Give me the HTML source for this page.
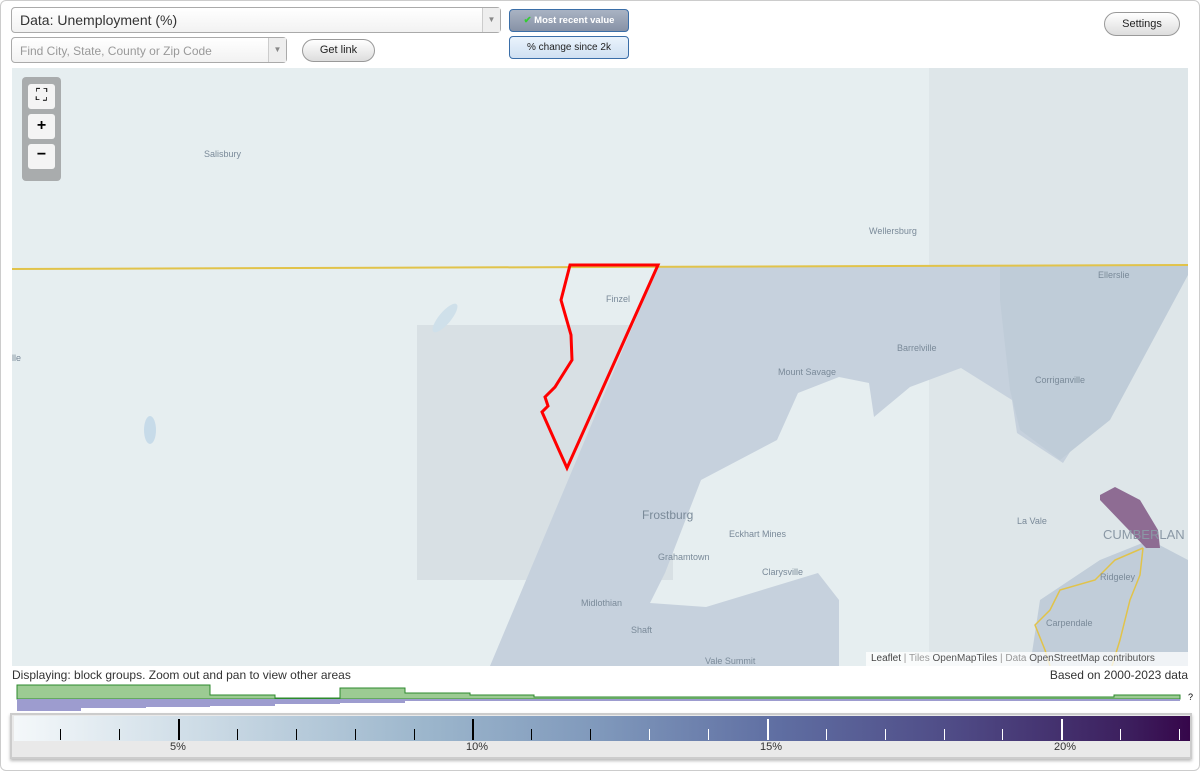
<!DOCTYPE html>
<html><head><meta charset="utf-8"><style>
*{margin:0;padding:0;box-sizing:border-box}
body{width:1200px;height:771px;background:#fff;font-family:"Liberation Sans",sans-serif;position:relative;overflow:hidden}
.frame{position:absolute;left:0;top:0;width:1200px;height:771px;border:1px solid #ccc;border-radius:6px}
.sel{position:absolute;border:1px solid #aaa;border-radius:4px;background:linear-gradient(#fff,#f2f2f2);font-size:14px;color:#333;padding:4px 8px}
.sel .arr{position:absolute;right:0;top:0;bottom:0;width:18px;border-left:1px solid #ccc;background:#eee;color:#888;font-size:8px;text-align:center;line-height:24px}
.btn{position:absolute;border:1px solid #999;border-radius:12px;background:linear-gradient(#fff,#ddd);font-size:11px;text-align:center;color:#222}
.tg{position:absolute;border:1px solid #3a6ea8;border-radius:4px;font-size:10px;text-align:center}
.lbl{position:absolute;font-size:9px;color:#7a8a99;white-space:nowrap}
.tick{position:absolute;width:1px;background:#000}
</style></head><body>
<div class="frame"></div>
<div class="sel" style="left:11px;top:7px;width:490px;height:26px">Data: Unemployment (%)<div class="arr">▼</div></div>
<div class="sel" style="left:11px;top:37px;width:276px;height:26px;color:#999;font-size:12px;padding-top:6px">Find City, State, County or Zip Code<div class="arr">▼</div></div>
<div class="btn" style="left:302px;top:39px;width:73px;height:23px;line-height:21px">Get link</div>
<div class="tg" style="left:509px;top:9px;width:120px;height:23px;line-height:21px;background:linear-gradient(#a9b3c3,#8792a6);color:#fff;font-weight:bold;font-size:9.5px"><span style="color:#3c3">✔</span> Most recent value</div>
<div class="tg" style="left:509px;top:36px;width:120px;height:23px;line-height:21px;background:linear-gradient(#eaf3fc,#cfe0f2);color:#222">% change since 2k</div>
<div class="btn" style="left:1104px;top:12px;width:76px;height:24px;line-height:22px">Settings</div>

<svg style="position:absolute;left:12px;top:68px" width="1176" height="598" viewBox="12 68 1176 598">
<rect x="12" y="68" width="1176" height="598" fill="#e6eef0"/>
<rect x="417" y="325" width="256" height="255" fill="#d8e0e4"/>
<rect x="929" y="68" width="259" height="598" fill="#dee6e9"/>
<polygon points="658,266 1188,266 1063,463 1017,433 1012,400 961,368 910,387 874,417 869,383 839,377 798,393 777,440 701,480 665,573 650,603 706,607 818,573 839,600 839,666 490,666" fill="#c6d1dd"/>
<polygon points="1000,266 1188,266 1188,275 1110,420 1060,460 1020,430 1010,390 1000,300" fill="#bfccd8"/>
<polygon points="1040,600 1100,560 1150,540 1188,560 1188,666 1030,666" fill="#c1cdd9"/>
<polygon points="1100,495 1115,487 1140,500 1158,530 1160,548 1146,548 1100,500" fill="#8e6c93"/>
<polyline points="1143,548 1140,575 1130,600 1120,640 1112,666" fill="none" stroke="#e1c34a" stroke-width="1.5"/>
<polyline points="1143,548 1115,560 1095,580 1060,590 1050,610 1035,625 1045,650 1050,666" fill="none" stroke="#e1c34a" stroke-width="1.5"/>
<ellipse cx="150" cy="430" rx="6" ry="14" fill="#c7dbe9"/>
<ellipse cx="445" cy="318" rx="18" ry="6" fill="#cfe0ea" transform="rotate(-50 445 318)"/>
<line x1="12" y1="269" x2="1188" y2="265" stroke="#e1c34a" stroke-width="2"/>
<polygon points="570,265 658,265 567,468 558,448 542,412 548,406 545,397 555,387 572,360 571,335 561,300" fill="none" stroke="#f00" stroke-width="3"/>
</svg>
<div class="lbl" style="left:204px;top:149px">Salisbury</div>
<div class="lbl" style="left:869px;top:226px">Wellersburg</div>
<div class="lbl" style="left:1098px;top:270px">Ellerslie</div>
<div class="lbl" style="left:606px;top:294px">Finzel</div>
<div class="lbl" style="left:897px;top:343px">Barrelville</div>
<div class="lbl" style="left:778px;top:367px">Mount Savage</div>
<div class="lbl" style="left:1035px;top:375px">Corriganville</div>
<div class="lbl" style="left:12px;top:353px">lle</div>
<div class="lbl" style="left:642px;top:508px;font-size:12px">Frostburg</div>
<div class="lbl" style="left:729px;top:529px">Eckhart Mines</div>
<div class="lbl" style="left:1017px;top:516px">La Vale</div>
<div class="lbl" style="left:1103px;top:527px;font-size:13px;color:#8a98a5">CUMBERLAN</div>
<div class="lbl" style="left:658px;top:552px">Grahamtown</div>
<div class="lbl" style="left:762px;top:567px">Clarysville</div>
<div class="lbl" style="left:1100px;top:572px">Ridgeley</div>
<div class="lbl" style="left:581px;top:598px">Midlothian</div>
<div class="lbl" style="left:1046px;top:618px">Carpendale</div>
<div class="lbl" style="left:631px;top:625px">Shaft</div>
<div class="lbl" style="left:705px;top:656px">Vale Summit</div>
<div style="position:absolute;left:866px;top:652px;width:322px;height:14px;background:rgba(255,255,255,.75);font-size:10px;color:#999;line-height:14px;padding-left:5px"><b style="color:#444;font-weight:normal">Leaflet</b> | Tiles <span style="color:#555">OpenMapTiles</span> | Data <span style="color:#555">OpenStreetMap contributors</span></div>
<div style="position:absolute;left:22px;top:77px;width:39px;height:104px;background:#a9acad;border-radius:4px"></div>
<div style="position:absolute;left:28px;top:84px;width:27px;height:25px;background:#f4f4f4;border-radius:3px;font-size:16px;text-align:center;line-height:24px">⛶</div>
<div style="position:absolute;left:28px;top:114px;width:27px;height:25px;background:#f4f4f4;border-radius:3px;font-size:16px;font-weight:bold;text-align:center;line-height:24px">+</div>
<div style="position:absolute;left:28px;top:144px;width:27px;height:25px;background:#f4f4f4;border-radius:3px;font-size:16px;font-weight:bold;text-align:center;line-height:22px">−</div>

<div style="position:absolute;left:12px;top:668px;font-size:12px;color:#333">Displaying: block groups. Zoom out and pan to view other areas</div>
<div style="position:absolute;right:12px;top:668px;font-size:12px;color:#333">Based on 2000-2023 data</div>
<svg style="position:absolute;left:0;top:680px" width="1200" height="34">
<polygon points="17,5 210,5 210,15 275,15 275,18 340,18 340,8 405,8 405,13 470,13 470,15 534,15 534,17 1114,17 1114,15 1180,15 1180,19 17,19" fill="#9ccb93" stroke="#2c8a2c" stroke-width="1"/>
<polygon points="17,19 1180,19 1180,21 470,21 405,21 405,23 340,23 340,24 275,24 275,26 210,26 210,27 146,27 146,28 81,28 81,31 17,31" fill="#9d9ccf"/>
<text x="1188" y="20" font-size="9" font-family="Liberation Sans">?</text>
</svg>
<div style="position:absolute;left:10px;top:713px;width:1182px;height:46px;background:#e9e9e9;border:2px solid #ccc;box-shadow:0 2px 3px #bbb"></div>
<div style="position:absolute;left:14px;top:716px;width:1176px;height:25px;background:linear-gradient(90deg,#f4f8fa,#cfdde7 15%,#9cb6cc 35%,#7f98bb 50%,#5f6ea2 65%,#4f4b86 80%,#3c1e5d 95%,#36064a)"></div>
<div style="position:absolute;left:170px;top:741px;font-size:11px;color:#333">5%</div>
<div style="position:absolute;left:466px;top:741px;font-size:11px;color:#333">10%</div>
<div style="position:absolute;left:760px;top:741px;font-size:11px;color:#333">15%</div>
<div style="position:absolute;left:1054px;top:741px;font-size:11px;color:#333">20%</div>
<div class="tick" style="left:60px;top:729px;height:11px"></div>
<div class="tick" style="left:119px;top:729px;height:11px"></div>
<div class="tick" style="left:178px;top:719px;height:21px;width:2px"></div>
<div class="tick" style="left:237px;top:729px;height:11px"></div>
<div class="tick" style="left:296px;top:729px;height:11px"></div>
<div class="tick" style="left:355px;top:729px;height:11px"></div>
<div class="tick" style="left:414px;top:729px;height:11px"></div>
<div class="tick" style="left:472px;top:719px;height:21px;width:2px"></div>
<div class="tick" style="left:531px;top:729px;height:11px"></div>
<div class="tick" style="left:590px;top:729px;height:11px"></div>
<div class="tick" style="left:649px;top:729px;height:11px;background:#fff"></div>
<div class="tick" style="left:708px;top:729px;height:11px;background:#fff"></div>
<div class="tick" style="left:767px;top:719px;height:21px;width:2px;background:#fff"></div>
<div class="tick" style="left:826px;top:729px;height:11px;background:#fff"></div>
<div class="tick" style="left:885px;top:729px;height:11px;background:#fff"></div>
<div class="tick" style="left:944px;top:729px;height:11px;background:#fff"></div>
<div class="tick" style="left:1002px;top:729px;height:11px;background:#fff"></div>
<div class="tick" style="left:1061px;top:719px;height:21px;width:2px;background:#fff"></div>
<div class="tick" style="left:1120px;top:729px;height:11px;background:#fff"></div>
<div class="tick" style="left:1179px;top:729px;height:11px;background:#fff"></div>
</body></html>
